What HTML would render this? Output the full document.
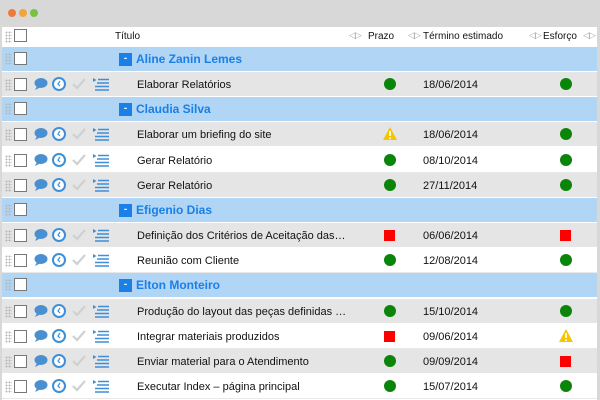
<!DOCTYPE html>
<html><head><meta charset="utf-8"><style>
*{margin:0;padding:0;box-sizing:border-box}
body{width:600px;height:400px;background:#d8d8d8;font-family:"Liberation Sans",sans-serif;font-size:11px;color:#111;position:relative;overflow:hidden}
.dot{position:absolute;top:9px;width:8px;height:8px;border-radius:50%}
.main{position:absolute;left:2px;top:27px;width:595px;height:373px;background:#fff}
.hdr{position:absolute;left:0;top:0;width:595px;height:20px;background:#fff}
.row{position:absolute;left:0;width:595px;height:25px;border-bottom:1px solid #fff}
.g{background:#b1d5f5}
.a{background:#e5e5e5}
.w{background:#fff;border-bottom:1px solid #e8e8e8}
.drag{position:absolute;left:3px;width:7px;height:12px;background-image:radial-gradient(circle,#b8b8b8 0.9px,transparent 1.1px);background-size:3px 3px}
.cb{position:absolute;left:12px;width:13px;height:13px;border:1px solid #777;background:#fff}
.ic{position:absolute;left:30px}
.t{position:absolute;left:135px;white-space:nowrap}
.gn{position:absolute;left:134px;font-weight:bold;font-size:12px;color:#1a7fe6}
.mn{position:absolute;left:117px;width:13px;height:13px;background:#1a7fe6;color:#fff;font-size:10px;font-weight:bold;text-align:center;line-height:11px}
.dt{position:absolute;left:421px}
.c{position:absolute;width:12px;height:12px;border-radius:50%;background:#0a850a}
.r{position:absolute;width:11px;height:11px;background:#f00}
.tri{position:absolute}
.hl{position:absolute;top:4px;font-size:10px}
.rs{position:absolute;top:3px;color:#aaa;font-size:9px;letter-spacing:-1px}
</style></head><body>
<div class="dot" style="left:8px;background:#f07a3c"></div>
<div class="dot" style="left:19px;background:#f3a53a"></div>
<div class="dot" style="left:30px;background:#7bc043"></div>
<div class="main">
<div class="hdr">
<div class="drag" style="top:4px"></div><div class="cb" style="top:2px"></div>
<div class="hl" style="left:113px">Título</div>
<div class="rs" style="left:347px">◁▷</div>
<div class="hl" style="left:366px">Prazo</div>
<div class="rs" style="left:406px">◁▷</div>
<div class="hl" style="left:421px">Término estimado</div>
<div class="rs" style="left:527px">◁▷</div>
<div class="hl" style="left:541px">Esforço</div>
<div class="rs" style="left:581px">◁▷</div>
</div>
<div id="rows"></div>
</div>
<svg width="0" height="0" style="position:absolute"><defs><g id="ics">
<ellipse cx="9" cy="7" rx="6.5" ry="5" fill="#4a90d0"/><path d="M5 10 L3 14 L9 11 Z" fill="#4a90d0"/>
<circle cx="27" cy="8" r="6" fill="#fff" stroke="#3d8fd8" stroke-width="2"/><path d="M28 5 L26 8 L28 10" fill="none" stroke="#3d8fd8" stroke-width="1.2"/>
<path d="M41 8 L45 12 L53 3" fill="none" stroke="#d0d0d0" stroke-width="2.2"/>
<path d="M66 3.5 L77 3.5 M65 7 L77 7 M63 10.5 L77 10.5 M63 14 L77 14" stroke="#3d8fd8" stroke-width="1.5"/><path d="M61 2 L64.5 4 L61 6Z" fill="#3d8fd8"/>
</g></defs></svg>
<script>
var G='c',R='r',W='w';
var d=[['g','Aline Zanin Lemes'],['t','Elaborar Relatórios',G,'18/06/2014',G],['g','Claudia Silva'],['t','Elaborar um briefing do site',W,'18/06/2014',G],['t','Gerar Relatório',G,'08/10/2014',G],['t','Gerar Relatório',G,'27/11/2014',G],['g','Efigenio Dias'],['t','Definição dos Critérios de Aceitação das…',R,'06/06/2014',R],['t','Reunião com Cliente',G,'12/08/2014',G],['g','Elton Monteiro'],['t','Produção do layout das peças definidas …',G,'15/10/2014',G],['t','Integrar materiais produzidos',R,'09/06/2014',W],['t','Enviar material para o Atendimento',G,'09/09/2014',R],['t','Executar Index – página principal',G,'15/07/2014',G]];
function ind(k,x){if(k=='c')return '<div class="c" style="left:'+(x-6)+'px;top:6px"></div>';if(k=='r')return '<div class="r" style="left:'+(x-6)+'px;top:7px"></div>';return '<svg class="tri" style="left:'+(x-8)+'px;top:4px" width="16" height="15"><path d="M8 1 L15 14 L1 14Z" fill="#f6c500"/><path d="M8 5 L8 10 M8 11.5 L8 13" stroke="#fff" stroke-width="1.8"/></svg>';}
var h='',alt=0;
d.forEach(function(r,i){var top=(20+i*25.15).toFixed(2);
if(r[0]=='g'){alt=0;h+='<div class="row g" style="top:'+top+'px"><div class="drag" style="top:6px"></div><div class="cb" style="top:5px"></div><div class="mn" style="top:6px">-</div><div class="gn" style="top:5px">'+r[1]+'</div></div>';}
else{var cl=alt%2?'w':'a';alt++;h+='<div class="row '+cl+'" style="top:'+top+'px"><div class="drag" style="top:7px"></div><div class="cb" style="top:6px"></div><svg class="ic" style="top:4px" width="80" height="16"><use href="#ics"/></svg><div class="t" style="top:7px">'+r[1]+'</div>'+ind(r[2],388)+'<div class="dt" style="top:7px">'+r[3]+'</div>'+ind(r[4],564)+'</div>';}
});
document.getElementById('rows').innerHTML=h;
</script>
</body></html>
